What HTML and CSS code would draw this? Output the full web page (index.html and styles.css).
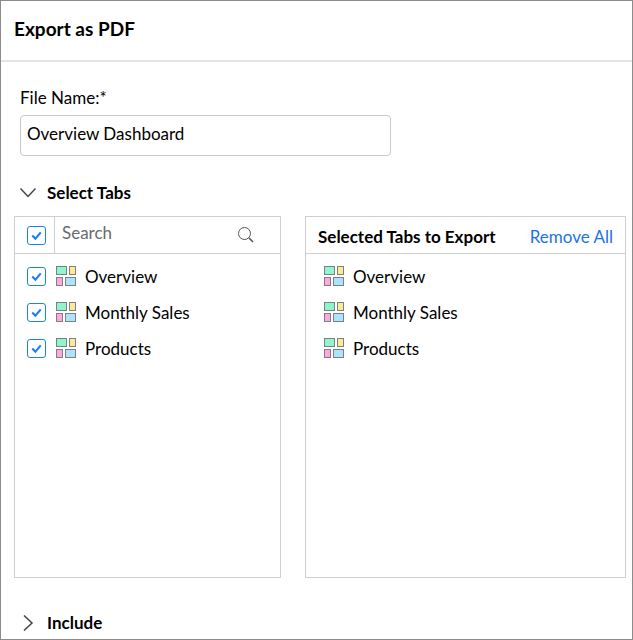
FILE: index.html
```html
<!DOCTYPE html>
<html lang="en">
<head>
<meta charset="utf-8">
<meta name="viewport" content="width=device-width, initial-scale=1">
<title>Export as PDF</title>
<link rel="stylesheet" href="styles.css">
</head>
<body>
<svg class="sprite" aria-hidden="true">
  <symbol id="tab-icon" viewBox="0 0 20 20">
    <g stroke="#7c8082" stroke-width="1">
      <rect x=".5" y=".5" width="10" height="8" fill="#8ff5cd"/>
      <rect x="13.5" y=".5" width="6" height="8" fill="#fdea98"/>
      <rect x=".5" y="11.5" width="6" height="8" fill="#fda8e0"/>
      <rect x="9.5" y="11.5" width="10" height="8" fill="#ade4fd"/>
    </g>
  </symbol>
</svg>
<main class="dialog">
  <header class="dialog-header">
    <h1>Export as PDF</h1>
  </header>
  <form class="dialog-body">
    <div class="field">
      <label for="file-name">File Name:*</label>
      <input class="text-input" id="file-name" type="text" value="Overview Dashboard">
    </div>

    <button class="section-toggle" type="button" aria-expanded="true">
      <svg class="chevron" viewBox="0 0 16 16" aria-hidden="true"><path d="M.5 3.5 8 11.5l7.500-8"/></svg>
      <span>Select Tabs</span>
    </button>

    <div class="panels">
      <section class="panel" aria-label="Available tabs">
        <div class="panel-header">
          <div class="check-all"><input class="check" type="checkbox" aria-label="Select all" checked></div>
          <input class="search-input" type="search" placeholder="Search" aria-label="Search">
          <svg class="search-icon" viewBox="0 0 16 16" aria-hidden="true"><circle cx="6.5" cy="6.5" r="6"/><path class="handle" d="m11 11 4 4"/></svg>
        </div>
        <ul class="tab-list">
          <li><label class="tab"><input class="check" type="checkbox" checked><svg class="tab-icon" aria-hidden="true"><use href="#tab-icon"/></svg><span>Overview</span></label></li>
          <li><label class="tab"><input class="check" type="checkbox" checked><svg class="tab-icon" aria-hidden="true"><use href="#tab-icon"/></svg><span>Monthly Sales</span></label></li>
          <li><label class="tab"><input class="check" type="checkbox" checked><svg class="tab-icon" aria-hidden="true"><use href="#tab-icon"/></svg><span>Products</span></label></li>
        </ul>
      </section>

      <section class="panel panel-selected">
        <div class="panel-header">
          <h2>Selected Tabs to Export</h2>
          <button class="link-button" type="button">Remove All</button>
        </div>
        <ul class="tab-list">
          <li class="tab"><svg class="tab-icon" aria-hidden="true"><use href="#tab-icon"/></svg><span>Overview</span></li>
          <li class="tab"><svg class="tab-icon" aria-hidden="true"><use href="#tab-icon"/></svg><span>Monthly Sales</span></li>
          <li class="tab"><svg class="tab-icon" aria-hidden="true"><use href="#tab-icon"/></svg><span>Products</span></li>
        </ul>
      </section>
    </div>

    <button class="section-toggle section-last" type="button" aria-expanded="false">
      <svg class="chevron" viewBox="0 0 16 16" aria-hidden="true"><path d="m4 .5 8 7.500-8 7.500"/></svg>
      <span>Include</span>
    </button>
  </form>
</main>
</body>
</html>
```
FILE: styles.css
```css
:root {
  --line: #cfcfcf;
  --blue: #1a80f5;
}

* {
  box-sizing: border-box;
}

body {
  margin: 0;
  background: #fff;
  color: #000;
  font: 17px/24px Lato, "Liberation Sans", sans-serif;
}

h1,
h2,
ul {
  margin: 0;
  padding: 0;
}

button,
input {
  font: inherit;
  color: inherit;
}

.sprite {
  display: none;
}

.dialog {
  min-height: 100vh;
  border: 1px solid #8c8c8c;
}

.dialog-header {
  padding: 16px 13px 19px;
  border-bottom: 2px solid #e4e4e4;
}

.dialog-header h1 {
  font-size: 19px;
  line-height: 24px;
}

.dialog-body {
  padding: 24px 6px 0 13px;
}

.field {
  display: flex;
  flex-direction: column;
  gap: 5px;
  padding-left: 6px;
}

.text-input {
  width: 100%;
  max-width: 371px;
  height: 41px;
  padding: 0 6px 4px;
  border: 1px solid #c9c9c9;
  border-radius: 4px;
  outline: 0;
}

.section-toggle {
  display: flex;
  align-items: center;
  gap: 11px;
  margin-top: 25px;
  padding: 0 6px;
  border: 0;
  background: none;
  font-weight: 700;
}

.section-last {
  margin-top: 33px;
}

.chevron {
  width: 16px;
  height: 16px;
  fill: none;
  stroke: #444;
  stroke-width: 1.5;
}

.panels {
  display: grid;
  grid-template-columns: minmax(0, 267fr) minmax(0, 321fr);
  gap: 24px;
  margin-top: 11px;
}

.panel {
  min-height: 362px;
  border: 1px solid var(--line);
}

.panel-header {
  display: flex;
  align-items: center;
  height: 37px;
  border-bottom: 1px solid var(--line);
}

.check-all {
  display: flex;
  align-items: center;
  align-self: stretch;
  padding: 1px 8px 0 12px;
  border-right: 1px solid var(--line);
}

.check {
  appearance: none;
  flex: none;
  width: 19px;
  height: 19px;
  margin: 0;
  border: 1px solid var(--blue);
  border-radius: 3px;
  background: #fff;
}

.check:checked {
  background: url("data:image/svg+xml,%3Csvg xmlns='http://www.w3.org/2000/svg' viewBox='0 0 16 16'%3E%3Cpath d='m4 8 3 3 5-6' fill='none' stroke='%231a80f5' stroke-width='2'/%3E%3C/svg%3E") center / 17px no-repeat;
}

.search-input {
  flex: 1;
  min-width: 0;
  height: 32px;
  padding: 0 7px 5px;
  border: 0;
  outline: 0;
  background: none;
}

.search-input::placeholder {
  color: #6b6b6b;
  opacity: 1;
}

.search-icon {
  flex: none;
  width: 16px;
  height: 16px;
  margin-right: 26px;
  fill: none;
  stroke: #555;
}

.search-icon .handle {
  stroke-width: 1.6;
}

.tab-list {
  padding-top: 5px;
  list-style: none;
}

.tab {
  display: flex;
  align-items: center;
  height: 36px;
  padding-left: 12px;
}

.panel-selected .tab {
  padding-left: 18px;
}

.tab .check {
  margin: 0 10px 1px 0;
}

.tab-icon {
  width: 20px;
  height: 20px;
  margin: 0 9px 2px 0;
}

.panel-selected .panel-header {
  justify-content: space-between;
  padding: 4px 12px 0;
}

.panel-header h2 {
  font-size: 17px;
  white-space: nowrap;
}

.link-button {
  padding: 0;
  border: 0;
  background: none;
  color: #1a73e8;
  white-space: nowrap;
}
```
